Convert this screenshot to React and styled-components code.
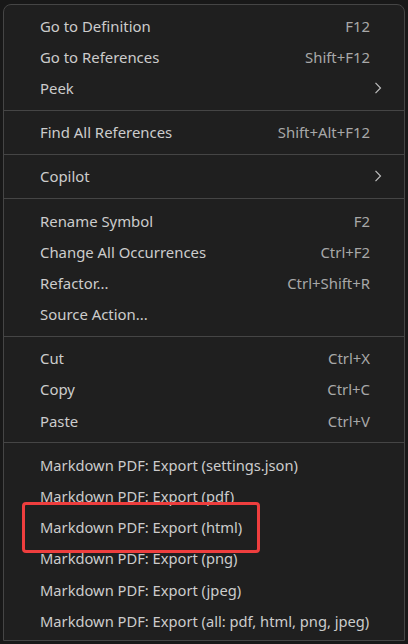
import React from 'react';
import styled, { createGlobalStyle } from 'styled-components';

const Global = createGlobalStyle`
  html, body { margin: 0; padding: 0; background: #181818; }
  body { width: 408px; height: 644px; overflow: hidden; }
`;

const Page = styled.div`
  box-sizing: border-box;
  width: 408px;
  height: 644px;
  padding: 4px 3px 3px 3px;
  background: #181818;
`;

const Menu = styled.div`
  position: relative;
  box-sizing: border-box;
  height: 100%;
  padding: 5px 0 4px;
  background: #1f1f1f;
  border: 1px solid #454545;
  border-radius: 8px 8px 0 0;
  font-family: "Noto Sans", "Open Sans", sans-serif;
  color: #cccccc;
`;

const Item = styled.div`
  display: flex;
  align-items: center;
  height: 31.2px;
  padding: 0 20px 0 36px;
  font-size: ${p => (p.small ? '14.7px' : '14.9px')};
`;

const Label = styled.span`
  flex: 1;
  white-space: nowrap;
`;

const Keys = styled.span`
  color: #a8a8a8;
  padding-right: 14px;
  white-space: nowrap;
`;

const Arrow = styled.svg`
  width: 12px;
  height: 12px;
  margin-left: 12px;
`;

const Sep = styled.div`
  height: 1px;
  margin: 6px 0;
  background: #454545;
`;

const Highlight = styled.div`
  position: absolute;
  left: 18px;
  top: 497px;
  width: 232px;
  height: 45px;
  border: 3px solid #ee3e3e;
  border-radius: 4px;
`;

const Chevron = () => (
  <Arrow viewBox="0 0 12 12">
    <path d="M3.5 0.8 L8.5 6 L3.5 11.2" fill="none" stroke="#bdbdbd" strokeWidth="1.2" />
  </Arrow>
);

const groups = [
  [
    ['Go to Definition', 'F12'],
    ['Go to References', 'Shift+F12'],
    ['Peek', null, true],
  ],
  [['Find All References', 'Shift+Alt+F12']],
  [['Copilot', null, true]],
  [
    ['Rename Symbol', 'F2'],
    ['Change All Occurrences', 'Ctrl+F2'],
    ['Refactor...', 'Ctrl+Shift+R'],
    ['Source Action...'],
  ],
  [
    ['Cut', 'Ctrl+X'],
    ['Copy', 'Ctrl+C'],
    ['Paste', 'Ctrl+V'],
  ],
  [
    ['Markdown PDF: Export (settings.json)'],
    ['Markdown PDF: Export (pdf)'],
    ['Markdown PDF: Export (html)'],
    ['Markdown PDF: Export (png)'],
    ['Markdown PDF: Export (jpeg)'],
    ['Markdown PDF: Export (all: pdf, html, png, jpeg)'],
  ],
];

export default function App() {
  return (
    <Page>
      <Global />
      <Menu>
        {groups.map((g, gi) => (
          <React.Fragment key={gi}>
            {gi > 0 && <Sep />}
            {g.map(([label, keys, sub]) => (
              <Item key={label} small={gi === 5}>
                <Label>{label}</Label>
                {keys && <Keys>{keys}</Keys>}
                {sub && <Chevron />}
              </Item>
            ))}
          </React.Fragment>
        ))}
        <Highlight />
      </Menu>
    </Page>
  );
}
